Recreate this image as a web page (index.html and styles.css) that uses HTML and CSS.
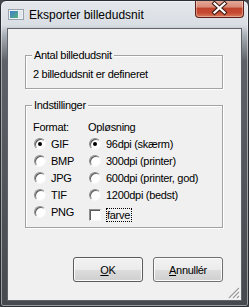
FILE: index.html
```html
<!DOCTYPE html>
<html lang="da">
<head>
    <meta charset="UTF-8">
    <title>Eksporter billedudsnit</title>
    <link rel="stylesheet" href="styles.css">
</head>
<body>
    <div class="window">
        <div class="titlebar">
            <svg class="app-icon" width="16" height="11" viewBox="0 0 16 11">
                <defs>
                    <linearGradient id="pic" x1="0" y1="0" x2="1" y2="1">
                        <stop offset="0" stop-color="#3f7fcf"/>
                        <stop offset="1" stop-color="#57b07a"/>
                    </linearGradient>
                </defs>
                <rect x="0.5" y="0.5" width="15" height="10" fill="#eef1f4" stroke="#9aa2ac"/>
                <rect x="2" y="2" width="8" height="7" fill="url(#pic)"/>
                <rect x="11" y="2" width="3" height="7" fill="#dfe6ee"/>
            </svg>
            <span class="title">Eksporter billedudsnit</span>
            <div class="close">
                <svg width="47" height="16" viewBox="0 0 47 16">
                    <path d="M18.5 3.5 L28.5 12.5 M28.5 3.5 L18.5 12.5" stroke="#3a1a16" stroke-width="4.2" stroke-linecap="square"/>
                    <path d="M18.5 3.5 L28.5 12.5 M28.5 3.5 L18.5 12.5" stroke="#ffffff" stroke-width="2.2" stroke-linecap="square"/>
                </svg>
            </div>
        </div>

        <div class="client">
            <!-- Antal billedudsnit -->
            <fieldset class="group group-count">
                <legend>Antal billedudsnit</legend>
                <div class="count-text">2 billedudsnit er defineret</div>
            </fieldset>

            <!-- Indstillinger -->
            <fieldset class="group group-settings">
                <legend>Indstillinger</legend>
                <div class="options">
                    <div class="col col-format">
                        <div class="col-head">Format:</div>
                        <label class="opt"><span class="radio checked"></span>GIF</label>
                        <label class="opt"><span class="radio"></span>BMP</label>
                        <label class="opt"><span class="radio"></span>JPG</label>
                        <label class="opt"><span class="radio"></span>TIF</label>
                        <label class="opt"><span class="radio"></span>PNG</label>
                    </div>
                    <div class="col col-res">
                        <div class="col-head">Opløsning</div>
                        <label class="opt"><span class="radio checked"></span>96dpi (skærm)</label>
                        <label class="opt"><span class="radio"></span>300dpi (printer)</label>
                        <label class="opt"><span class="radio"></span>600dpi (printer, god)</label>
                        <label class="opt"><span class="radio"></span>1200dpi (bedst)</label>
                        <label class="opt opt-check"><span class="check"></span><span class="focus">farve</span></label>
                    </div>
                </div>
            </fieldset>

            <div class="buttons">
                <button class="btn btn-default"><u>O</u>K</button>
                <button class="btn"><u>A</u>nnullér</button>
            </div>

            <svg class="grip" width="12" height="12" viewBox="0 0 12 12">
                <path d="M11 1 L1 11 M11 5 L5 11 M11 9 L9 11" stroke="#ffffff" stroke-width="1.2" transform="translate(0.6 0.6)"/>
                <path d="M11 1 L1 11 M11 5 L5 11 M11 9 L9 11" stroke="#9b9b9b" stroke-width="1.2"/>
            </svg>
        </div>
    </div>
</body>
</html>
```

FILE: styles.css
```css
body {
    margin: 0;
    font-family: "Liberation Sans", Arial, sans-serif;
    font-size: 11px;
    letter-spacing: -0.3px;
    color: #000;
    background: #45484d;
}
.window {
    width: 249px;
    height: 307px;
    box-sizing: border-box;
    border: 1px solid #2a2d31;
    border-radius: 6px 6px 3px 3px;
    background: linear-gradient(to bottom, #e4e8ec 0, #d9dee4 24px, #aab0b7 34px, #5e6268 60px, #46494e 100%);
    box-shadow: inset 0 0 0 1px rgba(255, 255, 255, 0.45);
    display: flex;
    flex-direction: column;
    overflow: hidden;
}
.titlebar {
    height: 27px;
    flex: none;
    display: flex;
    align-items: flex-start;
    padding: 0 4px 0 7px;
}
.app-icon {
    margin-top: 8px;
    flex: none;
}
.title {
    margin-left: 5px;
    margin-top: 7px;
    font-size: 12px;
    line-height: 14px;
    letter-spacing: 0;
    color: #000;
}
.close {
    margin-left: auto;
    margin-top: -1px;
    width: 49px;
    height: 18px;
    box-sizing: border-box;
    border: 1px solid #5e2019;
    border-top: none;
    border-radius: 0 0 4px 4px;
    background: linear-gradient(to bottom, #e6ad9f 0, #d98b77 40%, #c1432c 50%, #c64a31 75%, #d9785b 100%);
    box-shadow: inset 0 0 0 1px rgba(255, 255, 255, 0.35);
}
.close svg {
    display: block;
}
.client {
    position: relative;
    flex: 1;
    margin: 0 6px 5px 6px;
    border: 1px solid #5f646b;
    background: #f0f0f0;
    padding: 0 18px 0 17px;
}
.group {
    margin: 0;
    min-width: 0;
    border: 1px solid #a3a3a3;
    box-shadow: 1px 1px 0 #ffffff, inset 1px 1px 0 #ffffff;
}
.group legend {
    padding: 0 2px;
    margin-left: -1px;
    line-height: 13px;
    background: #f0f0f0;
}
.group-count {
    margin-top: 20px;
    padding: 6px 7px 7px;
}
.count-text {
    line-height: 13px;
}
.group-settings {
    margin-top: 10px;
    padding: 7px 7px 7px;
}
.options {
    display: flex;
}
.col {
    display: flex;
    flex-direction: column;
}
.col-format {
    width: 55px;
}
.col-head {
    line-height: 16px;
}
.opt {
    height: 17px;
    display: flex;
    align-items: center;
    white-space: nowrap;
}
.radio {
    width: 12px;
    height: 12px;
    box-sizing: border-box;
    margin: 0 5px 0 1px;
    border-radius: 50%;
    border: 1px solid;
    border-color: #8e8e8e #f7f7f7 #f7f7f7 #8e8e8e;
    background: #ffffff;
    box-shadow: inset 1px 1px 0 #5c5c5c;
    display: flex;
    align-items: center;
    justify-content: center;
}
.radio.checked::after {
    content: "";
    width: 4px;
    height: 4px;
    border-radius: 50%;
    background: #000;
}
.opt-check {
    margin-top: 3px;
    margin-bottom: -3px;
}
.check {
    width: 12px;
    height: 12px;
    box-sizing: border-box;
    margin: 0 5px 0 1px;
    border: 1px solid;
    border-color: #8e8e8e #f7f7f7 #f7f7f7 #8e8e8e;
    background: #ffffff;
    box-shadow: inset 1px 1px 0 #5c5c5c;
}
.focus {
    border: 1px dotted #000;
    padding: 0 1px 0 0;
    line-height: 12px;
}
.buttons {
    display: flex;
    justify-content: flex-end;
    gap: 10px;
    margin-top: 29px;
}
.btn {
    width: 70px;
    height: 25px;
    padding: 0;
    font: inherit;
    letter-spacing: inherit;
    color: #000;
    border: 1px solid #707070;
    border-radius: 3px;
    background: linear-gradient(to bottom, #f2f2f2 0, #ebebeb 50%, #dddddd 51%, #cfcfcf 100%);
    box-shadow: inset 0 0 0 1px #fbfbfb;
}
.btn-default {
    border-color: #5a5a5a;
}
.grip {
    position: absolute;
    right: 1px;
    bottom: 1px;
}
```
